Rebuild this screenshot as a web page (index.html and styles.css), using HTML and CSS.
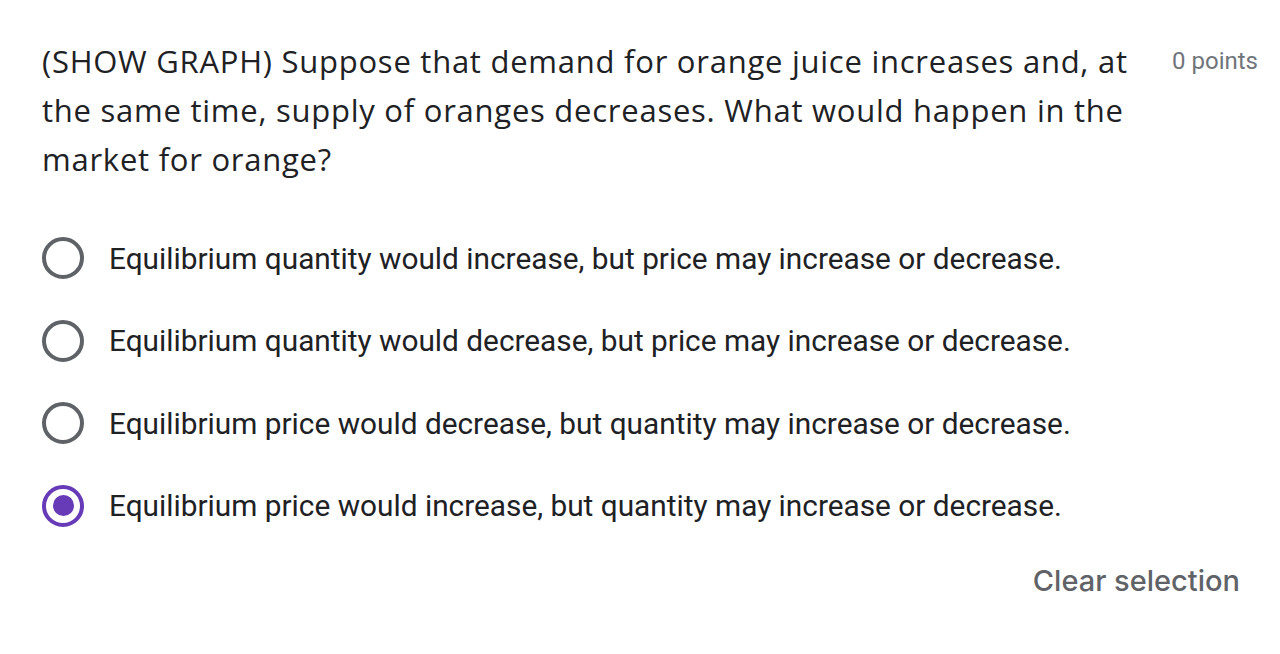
FILE: index.html
```html
<!DOCTYPE html>
<html>
<head>
<meta charset="utf-8">
<link rel="stylesheet" href="styles.css">
</head>
<body>
<div class="card">
  <div class="header">
    <div class="title">(SHOW GRAPH) Suppose that demand for orange juice increases and, at the same time, supply of oranges decreases. What would happen in the market for orange?</div>
    <div class="points">0 points</div>
  </div>
  <div class="options">
    <label class="option"><span class="radio"></span><span class="label">Equilibrium quantity would increase, but price may increase or decrease.</span></label>
    <label class="option"><span class="radio"></span><span class="label">Equilibrium quantity would decrease, but price may increase or decrease.</span></label>
    <label class="option"><span class="radio"></span><span class="label">Equilibrium price would decrease, but quantity may increase or decrease.</span></label>
    <label class="option"><span class="radio checked"></span><span class="label">Equilibrium price would increase, but quantity may increase or decrease.</span></label>
  </div>
  <div class="footer"><span class="clear">Clear selection</span></div>
</div>
</body>
</html>
```

FILE: styles.css
```css
html, body {
  margin: 0;
  padding: 0;
  background: #ffffff;
}
.card {
  padding: 37px 22px 0 42px;
  font-family: Roboto, "Liberation Sans", sans-serif;
  color: #202124;
}
.header {
  display: flex;
  align-items: flex-start;
  justify-content: space-between;
}
.title {
  width: 1100px;
  font-family: "Open Sans", Inter, sans-serif;
  font-size: 31px;
  line-height: 49px;
  letter-spacing: 0.75px;
  color: #202124;
}
.points {
  font-size: 24px;
  line-height: 49px;
  color: #70757a;
  white-space: nowrap;
}
.options {
  margin-top: 33px;
  display: flex;
  flex-direction: column;
}
.option {
  display: flex;
  align-items: center;
  gap: 25px;
  height: 82.5px;
  font-size: 29.8px;
}
.radio {
  box-sizing: border-box;
  width: 42px;
  height: 42px;
  border: 4px solid #5f6368;
  border-radius: 50%;
  flex: none;
  display: flex;
  align-items: center;
  justify-content: center;
}
.radio.checked {
  border-color: #673ab7;
}
.radio.checked::after {
  content: "";
  width: 21px;
  height: 21px;
  border-radius: 50%;
  background: #673ab7;
}
.label {
  color: #202124;
}
.footer {
  display: flex;
  justify-content: flex-end;
  padding-top: 16px;
  padding-right: 18px;
}
.clear {
  font-family: Inter, "Open Sans", sans-serif;
  font-size: 29px;
  font-weight: 500;
  color: #5f6368;
}
```
